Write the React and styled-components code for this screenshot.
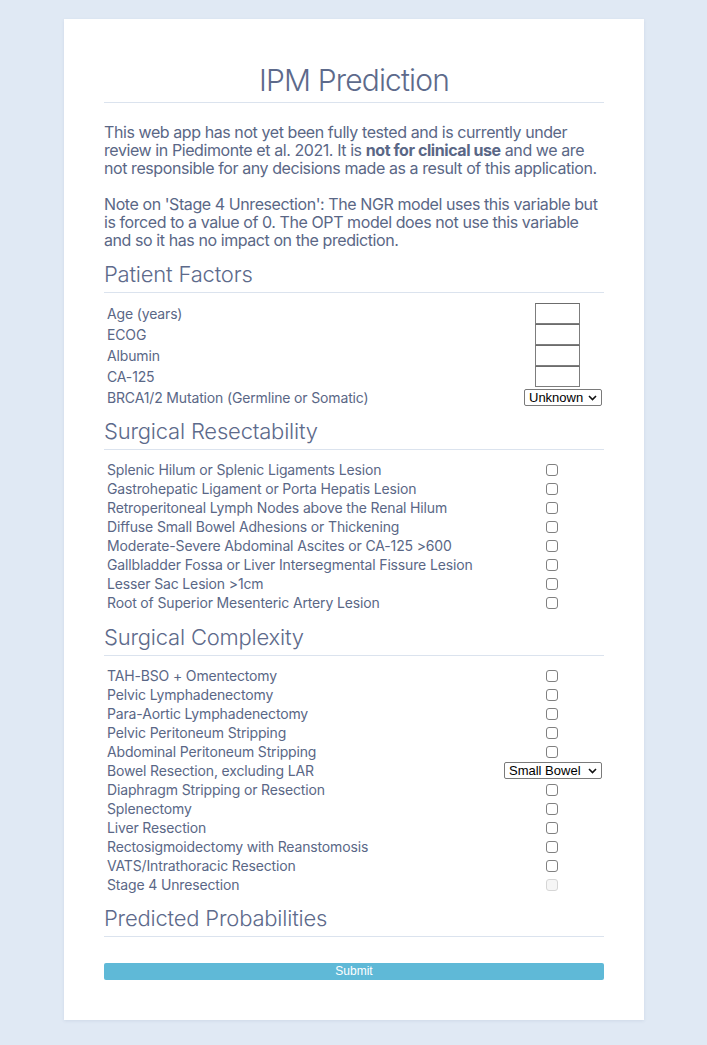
import React from "react";
import styled, { createGlobalStyle } from "styled-components";

const GlobalStyle = createGlobalStyle`
  html, body {
    margin: 0;
    padding: 0;
    background: #e0e9f4;
  }
  body {
    font-family: Inter, "Noto Sans", sans-serif;
    color: #5a6786;
  }
`;

const Page = styled.div`
  padding: 19px 0 25px 0;
`;

const Card = styled.div`
  width: 500px;
  margin: 0 auto;
  padding: 43px 40px 40px 40px;
  background: #fff;
  box-shadow: 0 1px 3px rgba(80, 110, 150, 0.12);
  position: relative;
  left: 0.5px;
`;

const Title = styled.h1`
  margin: 0;
  font-size: 30px;
  font-weight: 300;
  letter-spacing: -0.85px;
  line-height: 36px;
  text-align: center;
  color: #5d6a8b;
  padding-bottom: 4px;
  border-bottom: 1px solid #dbe3ee;
`;

const Intro = styled.p`
  margin: ${(p) => p.top || 0}px 0 0 0;
  font-size: 16px;
  letter-spacing: -0.42px;
  line-height: 18px;
  font-weight: 400;

  b {
    font-weight: 700;
  }
`;

const SectionTitle = styled.h2`
  margin: ${(p) => p.top || 12}px 0 0 0;
  font-size: 22px;
  font-weight: 300;
  letter-spacing: -0.2px;
  line-height: 26px;
  color: #5d6a8b;
  padding-bottom: 5px;
  border-bottom: 1px solid #dbe3ee;
`;

const Table = styled.div`
  margin-top: ${(p) => p.top || 10}px;
  display: flex;
  flex-direction: column;
`;

const Row = styled.div`
  display: grid;
  grid-template-columns: 1fr auto;
  align-items: center;
  height: ${(p) => p.height || 19}px;
`;

const Label = styled.span`
  padding-left: 3px;
  font-size: 14px;
  letter-spacing: -0.15px;
  line-height: 17px;
  white-space: nowrap;
`;

const Control = styled.div`
  display: flex;
  justify-content: flex-end;
  align-items: center;
  padding-right: ${(p) => p.right}px;
`;

const NumberInput = styled.input`
  box-sizing: border-box;
  width: 45px;
  height: 21px;
  margin: 0;
  padding: 0 2px;
  border: 1px solid #7d7d7d;
  border-top-color: #6c6c6c;
  background: #fff;
  font-size: 13px;
  outline: none;
`;

const Select = styled.select`
  box-sizing: border-box;
  appearance: none;
  -webkit-appearance: none;
  width: ${(p) => p.w}px;
  height: 17px;
  margin: 0;
  padding: 0 14px 0 4px;
  border: 1px solid #7a7a7a;
  border-radius: 2px;
  background: #fff
    url("data:image/svg+xml;charset=UTF-8,%3Csvg xmlns='http://www.w3.org/2000/svg' width='9' height='6' viewBox='0 0 9 6'%3E%3Cpath d='M1 1l3.5 3.5L8 1' fill='none' stroke='%23111' stroke-width='1.6'/%3E%3C/svg%3E")
    no-repeat right 4px center;
  font-family: "Liberation Sans", Arial, sans-serif;
  font-size: 13px;
  line-height: 15px;
  color: #000;
`;

const Check = styled.input.attrs({ type: "checkbox" })`
  appearance: none;
  -webkit-appearance: none;
  box-sizing: border-box;
  width: 12px;
  height: 12px;
  margin: 0;
  border: 1px solid #808080;
  border-radius: 3px;
  background: #fff;

  &:disabled {
    border-color: #d6d6d6;
    background: #f6f6f6;
  }
`;

const SubmitButton = styled.button`
  display: block;
  width: 100%;
  height: 17px;
  margin-top: 26px;
  padding: 0;
  border: none;
  border-radius: 2px;
  background: #5fb9d7;
  color: #fff;
  font-family: "Liberation Sans", Arial, sans-serif;
  font-size: 12px;
  line-height: 17px;
  cursor: pointer;
`;

const patientFactors = ["Age (years)", "ECOG", "Albumin", "CA-125"];

const resectability = [
  "Splenic Hilum or Splenic Ligaments Lesion",
  "Gastrohepatic Ligament or Porta Hepatis Lesion",
  "Retroperitoneal Lymph Nodes above the Renal Hilum",
  "Diffuse Small Bowel Adhesions or Thickening",
  "Moderate-Severe Abdominal Ascites or CA-125 >600",
  "Gallbladder Fossa or Liver Intersegmental Fissure Lesion",
  "Lesser Sac Lesion >1cm",
  "Root of Superior Mesenteric Artery Lesion",
];

const complexity = [
  { label: "TAH-BSO + Omentectomy" },
  { label: "Pelvic Lymphadenectomy" },
  { label: "Para-Aortic Lymphadenectomy" },
  { label: "Pelvic Peritoneum Stripping" },
  { label: "Abdominal Peritoneum Stripping" },
  { label: "Bowel Resection, excluding LAR", select: true },
  { label: "Diaphragm Stripping or Resection" },
  { label: "Splenectomy" },
  { label: "Liver Resection" },
  { label: "Rectosigmoidectomy with Reanstomosis" },
  { label: "VATS/Intrathoracic Resection" },
  { label: "Stage 4 Unresection", disabled: true },
];

const App = () => {
  return (
    <Page>
      <GlobalStyle />
      <Card>
        <Title>IPM Prediction</Title>
        <Intro top={20}>
          This web app has not yet been fully tested and is currently under
          review in Piedimonte et al. 2021. It is <b>not for clinical use</b>{" "}
          and we are not responsible for any decisions made as a result of
          this application.
        </Intro>
        <Intro top={18}>
          Note on 'Stage 4 Unresection': The NGR model uses this variable but
          is forced to a value of 0. The OPT model does not use this variable
          and so it has no impact on the prediction.
        </Intro>

        <SectionTitle top={12}>Patient Factors</SectionTitle>
        <Table top={10}>
          {patientFactors.map((label) => (
            <Row key={label} height={21}>
              <Label>{label}</Label>
              <Control right={24}>
                <NumberInput type="text" />
              </Control>
            </Row>
          ))}
          <Row height={21}>
            <Label>BRCA1/2 Mutation (Germline or Somatic)</Label>
            <Control right={2}>
              <Select w={78} defaultValue="Unknown">
                <option>Unknown</option>
                <option>Yes</option>
                <option>No</option>
              </Select>
            </Control>
          </Row>
        </Table>

        <SectionTitle top={10}>Surgical Resectability</SectionTitle>
        <Table top={10}>
          {resectability.map((label) => (
            <Row key={label}>
              <Label>{label}</Label>
              <Control right={46}>
                <Check />
              </Control>
            </Row>
          ))}
        </Table>

        <SectionTitle top={12}>Surgical Complexity</SectionTitle>
        <Table top={10}>
          {complexity.map((item) => (
            <Row key={item.label}>
              <Label>{item.label}</Label>
              {item.select ? (
                <Control right={2}>
                  <Select w={98} defaultValue="Small Bowel">
                    <option>None</option>
                    <option>Small Bowel</option>
                    <option>Large Bowel</option>
                  </Select>
                </Control>
              ) : (
                <Control right={46}>
                  <Check disabled={item.disabled} />
                </Control>
              )}
            </Row>
          ))}
        </Table>

        <SectionTitle top={11}>Predicted Probabilities</SectionTitle>
        <SubmitButton type="submit">Submit</SubmitButton>
      </Card>
    </Page>
  );
};

export default App;
